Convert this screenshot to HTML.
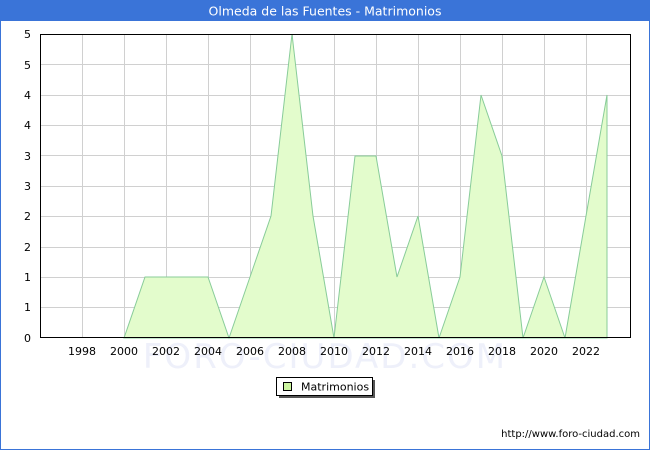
<!DOCTYPE html>
<html><head><meta charset="utf-8"><style>
body{margin:0;width:650px;height:450px;overflow:hidden;background:#fff;font-family:"DejaVu Sans","Liberation Sans",sans-serif}
</style></head><body>
<svg width="650" height="450" xmlns="http://www.w3.org/2000/svg" font-family="DejaVu Sans, Liberation Sans, sans-serif">
<rect x="0.5" y="0.5" width="649" height="449" fill="#fff" stroke="#3a74d8"/>
<rect x="0" y="0" width="650" height="21" fill="#3a74d8"/>
<text x="325" y="15.5" text-anchor="middle" font-size="12.5" fill="#fff">Olmeda de las Fuentes - Matrimonios</text>
<g stroke="#d0d0d0" stroke-width="1">
<line x1="40" y1="64.5" x2="631" y2="64.5"/><line x1="40" y1="95.5" x2="631" y2="95.5"/><line x1="40" y1="125.5" x2="631" y2="125.5"/><line x1="40" y1="155.5" x2="631" y2="155.5"/><line x1="40" y1="186.5" x2="631" y2="186.5"/><line x1="40" y1="216.5" x2="631" y2="216.5"/><line x1="40" y1="247.5" x2="631" y2="247.5"/><line x1="40" y1="277.5" x2="631" y2="277.5"/><line x1="40" y1="307.5" x2="631" y2="307.5"/>
<line x1="82.5" y1="35" x2="82.5" y2="338"/><line x1="124.5" y1="35" x2="124.5" y2="338"/><line x1="166.5" y1="35" x2="166.5" y2="338"/><line x1="208.5" y1="35" x2="208.5" y2="338"/><line x1="250.5" y1="35" x2="250.5" y2="338"/><line x1="292.5" y1="35" x2="292.5" y2="338"/><line x1="334.5" y1="35" x2="334.5" y2="338"/><line x1="376.5" y1="35" x2="376.5" y2="338"/><line x1="418.5" y1="35" x2="418.5" y2="338"/><line x1="460.5" y1="35" x2="460.5" y2="338"/><line x1="502.5" y1="35" x2="502.5" y2="338"/><line x1="544.5" y1="35" x2="544.5" y2="338"/><line x1="586.5" y1="35" x2="586.5" y2="338"/>
</g>
<text x="325" y="368" text-anchor="middle" font-size="34" fill="#eef0fa" letter-spacing="2">FORO-CIUDAD.COM</text>
<polygon fill="#e3fccc" stroke="#88cc99" stroke-width="1" points="124,338 145,277 166,277 187,277 208,277 229,338 250,277 271,216 292,34 313,216 334,338 355,156 376,156 397,277 418,216 439,338 460,277 481,95 502,156 523,338 544,277 565,338 586,216 607,95 607,338"/>
<rect x="40.5" y="34.5" width="590" height="303" fill="none" stroke="#000"/>
<g font-size="11" fill="#000" text-anchor="end">
<text x="31" y="342">0</text><text x="31" y="311">1</text><text x="31" y="281">1</text><text x="31" y="251">2</text><text x="31" y="220">2</text><text x="31" y="190">3</text><text x="31" y="160">3</text><text x="31" y="129">4</text><text x="31" y="99">4</text><text x="31" y="69">5</text><text x="31" y="38">5</text>
</g>
<g font-size="11" fill="#000" text-anchor="middle">
<text x="82" y="355">1998</text><text x="124" y="355">2000</text><text x="166" y="355">2002</text><text x="208" y="355">2004</text><text x="250" y="355">2006</text><text x="292" y="355">2008</text><text x="334" y="355">2010</text><text x="376" y="355">2012</text><text x="418" y="355">2014</text><text x="460" y="355">2016</text><text x="502" y="355">2018</text><text x="544" y="355">2020</text><text x="586" y="355">2022</text>
</g>
<rect x="279" y="380" width="96" height="18" fill="#555"/>
<rect x="276.5" y="377.5" width="96" height="18" fill="#fff" stroke="#000"/>
<rect x="283.5" y="382.5" width="8" height="8" fill="#ccf5a0" stroke="#000"/>
<text x="301" y="390.5" font-size="11" fill="#000">Matrimonios</text>
<text x="640" y="437" text-anchor="end" font-size="10" fill="#000">http://www.foro-ciudad.com</text>
</svg>
</body></html>
